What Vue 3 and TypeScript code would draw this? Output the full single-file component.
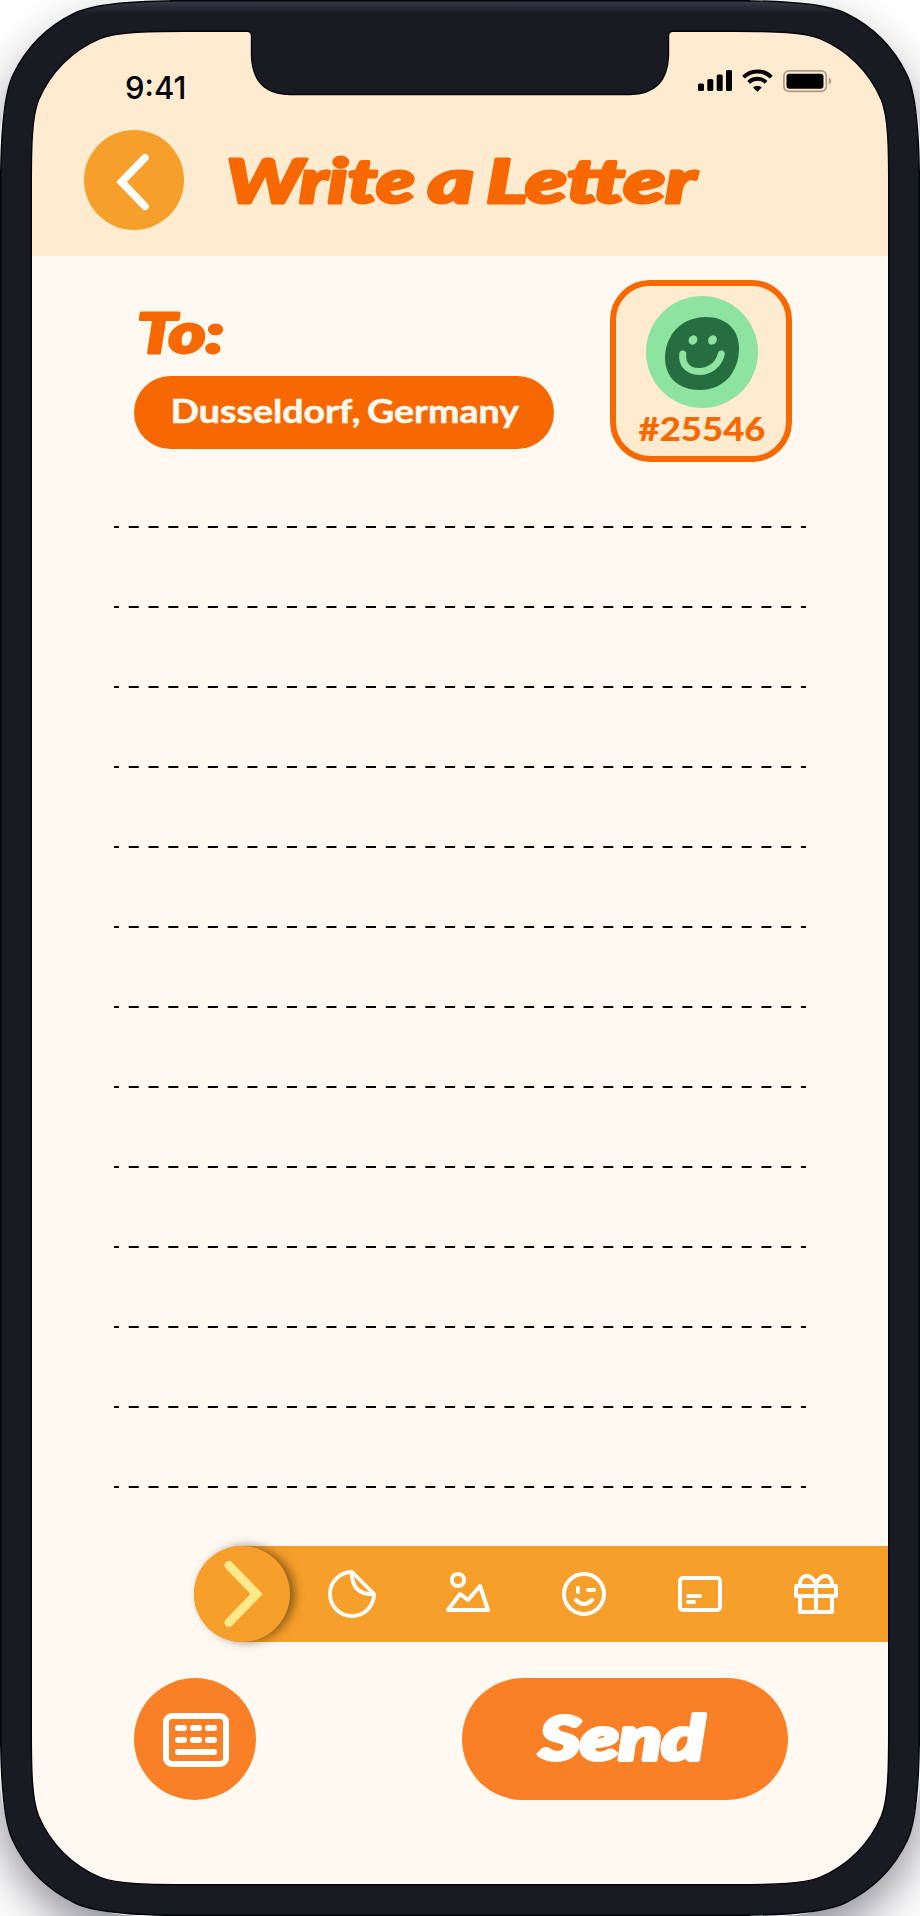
<script setup lang="ts">
const rules: number[] = Array.from({ length: 13 }, (_, i) => i)

type Point = [number, number]

// One smooth corner, as offsets from the corner's own origin, from the top edge to the left edge.
const outerCorner: Point[] = [
  [184, 0.7], [130, 0.7], [91, 5.3], [75, 13],
  [48, 26], [26, 48], [13, 75],
  [5.3, 91], [0.7, 130], [0.7, 184],
]
const innerCorner: Point[] = [
  [184, 31.3], [145, 31.3], [116, 32], [100, 38.6],
  [72.3, 50.2], [50.2, 72.3], [38.6, 100],
  [32, 116], [31.3, 145], [31.3, 184],
]

const W = 920
const H = 1916

function curve(points: Point[]): string {
  return points.slice(1).reduce((d, [x, y], i) => d + (i % 3 === 0 ? 'C' : ' ') + x + ',' + y, '')
}

function outline(corner: Point[], topEdge: string): string {
  const topLeft = corner
  const bottomLeft = corner.map(([x, y]): Point => [x, H - y]).reverse()
  const bottomRight = corner.map(([x, y]): Point => [W - x, H - y])
  const topRight = corner.map(([x, y]): Point => [W - x, y]).reverse()
  const line = (p: Point[]) => `L${p[0][0]},${p[0][1]}`
  return `M${topLeft[0][0]},${topLeft[0][1]}` + curve(topLeft)
    + line(bottomLeft) + curve(bottomLeft)
    + line(bottomRight) + curve(bottomRight)
    + line(topRight) + curve(topRight) + topEdge + 'Z'
}

const notch = 'L673,31.3Q668.5,31.3 668.5,36V56Q667,94 630,94.500H290Q253,94 251.500,56V36Q251.500,31.3 247,31.3'
const bezel = outline(outerCorner, '') + outline(innerCorner, notch)
</script>

<template>
  <main class="device">
    <div class="screen">
      <header class="top">
        <div class="status">
          <span class="time">9:41</span>
          <svg class="indicators" width="136" height="24" viewBox="0 0 136 24">
            <rect x="0" y="14.500" width="6" height="7.500" rx="1.6" />
            <rect x="9.3" y="10" width="6" height="12" rx="1.6" />
            <rect x="18.7" y="5.500" width="6" height="16.500" rx="1.6" />
            <rect x="28" y="1" width="6" height="21" rx="1.6" />
            <g fill="none" stroke="#000" stroke-width="4">
              <path d="M45.5 8.2A19.5 19.5 0 0 1 73.3 8.2" />
              <path d="M50.7 13.4A12.3 12.3 0 0 1 68.1 13.4" />
            </g>
            <path d="M55 18.4a6.5 6.5 0 0 1 8.800 0l-4.4 4.400z" />
            <rect x="85.9" y="1.8" width="42.4" height="20.6" rx="5" fill="none" stroke="#a99b87" stroke-width="1.7" />
            <rect x="88.5" y="4.700" width="37" height="15" rx="3" />
            <path d="M130.8 8.6q2.4 1.2 2.4 3.700t-2.4 3.700z" fill="#a99b87" />
          </svg>
        </div>
        <div class="heading">
          <button class="back" aria-label="Back">
            <svg width="100" height="100" viewBox="0 0 100 100">
              <path d="M61 27.700L37.500 52L61 76.300" fill="none" stroke="#fff" stroke-width="7.600" stroke-linecap="round" />
            </svg>
          </button>
          <svg class="title" width="480" height="76" viewBox="0 0 480 76" role="heading">
            <text y="54.500"><tspan x="1" textLength="189" lengthAdjust="spacingAndGlyphs">Write</tspan> <tspan x="203" textLength="46" lengthAdjust="spacingAndGlyphs">a</tspan> <tspan x="261" textLength="210" lengthAdjust="spacingAndGlyphs">Letter</tspan></text>
          </svg>
        </div>
      </header>

      <section class="recipient">
        <div class="address">
          <svg class="to" width="100" height="70" viewBox="0 0 100 70">
            <text x="-1" y="46.500" textLength="87" lengthAdjust="spacingAndGlyphs">To:</text>
          </svg>
          <div class="place">
            <svg width="360" height="50" viewBox="0 0 360 50">
              <text y="34.500"><tspan x="6.500" textLength="190" lengthAdjust="spacingAndGlyphs">Dusseldorf,</tspan> <tspan x="203" textLength="152" lengthAdjust="spacingAndGlyphs">Germany</tspan></text>
            </svg>
          </div>
        </div>
        <div class="stamp">
          <svg class="face" width="112" height="112" viewBox="0 0 112 112">
            <circle cx="56" cy="56" r="56" fill="#8de39f" />
            <path d="M59 21C79 20.500 93 33 93 52C93 77 77 94 54 94C33 94 19 82 19 61C20 38 36 21.500 59 21Z" fill="#266d3f" />
            <g fill="#8de39f">
              <ellipse cx="47" cy="44" rx="4.200" ry="4.900" transform="rotate(35 47 44)" />
              <ellipse cx="66.500" cy="44" rx="4.200" ry="4.900" transform="rotate(35 66.500 44)" />
            </g>
            <path d="M36.800 58C35.500 68 42 75.500 53 75.500C64.500 75.500 73 68 75.300 58" fill="none" stroke="#8de39f" stroke-width="7" stroke-linecap="round" />
          </svg>
          <svg class="number" width="136" height="40" viewBox="0 0 136 40">
            <text x="5.500" y="32.500" textLength="127" lengthAdjust="spacingAndGlyphs">#25546</text>
          </svg>
        </div>
      </section>

      <section class="paper">
        <svg v-for="rule in rules" :key="rule" class="rule" width="692" height="2" viewBox="0 0 692 2">
          <path d="M0 1H692" stroke="#000" stroke-width="2" stroke-dasharray="10 9.770" stroke-dashoffset="5" />
        </svg>
      </section>

      <nav class="tools">
        <button class="expand" aria-label="Collapse tools">
          <svg width="96" height="96" viewBox="0 0 96 96">
            <path d="M35 19.500L62.500 48L35 76.500" fill="none" stroke="#ffe98a" stroke-width="9" stroke-linecap="round" />
          </svg>
        </button>
        <div class="icons">
          <svg viewBox="0 0 48 48">
            <path d="M24 2A22 22 0 1 0 46 24ZM24 2C23.500 16 30 25 46 24" stroke-width="3.800" />
          </svg>
          <svg viewBox="0 0 48 48">
            <circle cx="14" cy="10" r="6.100" />
            <path d="M4 40L16 24L24 30L36 16L44 40Z" />
          </svg>
          <svg viewBox="0 0 48 48">
            <circle cx="24" cy="24" r="20" />
            <path d="M18 18V22M28 20H34M16 30Q24 38 32 30" />
          </svg>
          <svg viewBox="0 0 48 48">
            <rect x="4" y="8" width="40" height="32" rx="3" />
            <path d="M12 26H24M12 32H18" />
          </svg>
          <svg viewBox="0 0 48 48">
            <path d="M4 16H44V26H4ZM8 26V42H40V26M24 16V42M8 16C7 4 19 2 24 14C29 2 41 4 40 16" />
          </svg>
        </div>
      </nav>

      <footer class="actions">
        <button class="keyboard" aria-label="Keyboard">
          <svg width="66" height="54" viewBox="0 0 66 54" fill="none" stroke="#fff" stroke-width="6" stroke-linecap="round">
            <rect x="3" y="3" width="60" height="48" rx="6" />
            <path d="M15 15H21M30 15H36M45 15H51M15 27H21M30 27H36M45 27H51M15 39H51" />
          </svg>
        </button>
        <button class="send">
          <svg width="180" height="76" viewBox="0 0 180 76">
            <text x="4.500" y="59" textLength="165" lengthAdjust="spacingAndGlyphs">Send</text>
          </svg>
        </button>
      </footer>
    </div>

    <svg class="frame" width="920" height="1916" viewBox="0 0 920 1916">
      <defs>
        <linearGradient id="edge" x1="0" y1="0" x2="0" y2="1">
          <stop offset="0" stop-color="#3a3849" />
          <stop offset="0.007" stop-color="#181b22" />
          <stop offset="1" stop-color="#181b22" />
        </linearGradient>
      </defs>
      <path d="M170 0.500H750M170 1915.500H750M0.500 170V1746M919.500 170V1746" stroke="#000" />
      <path :d="bezel" fill="url(#edge)" stroke="#050508" stroke-width="1.400" fill-rule="evenodd" />
    </svg>
  </main>
</template>

<style>
body { background: #fff; }
</style>

<style scoped>
.device { position: relative; width: 920px; height: 1916px; overflow: hidden; box-sizing: border-box; padding: 32px; background: #fff; }
.device::before { content: ""; position: absolute; inset: 0; border-radius: 140px; box-shadow: 0 22px 48px rgba(20, 20, 36, 0.5); }
.frame { position: absolute; inset: 0; display: block; pointer-events: none; }
.screen { position: relative; width: 856px; height: 1852px; box-sizing: border-box; border-radius: 100px; background: #fff9f2; overflow: hidden; display: flex; flex-direction: column; }
svg { display: block; flex: none; overflow: visible; }
button { border: 0; padding: 0; display: flex; align-items: center; justify-content: center; flex: none; }
.top { height: 224px; flex: none; background: #ffebd0; box-sizing: border-box; padding-top: 37px; }
.status { height: 61px; display: flex; justify-content: space-between; padding: 0 54px 0 93px; box-sizing: border-box; }
.time { font: 500 31px/37px Inter, sans-serif; }
.heading { display: flex; padding-left: 52px; gap: 41px; }
.back { width: 100px; height: 100px; border-radius: 50%; background: #f79f2b; }
.title, .to, .send svg { font-family: Lato, sans-serif; font-weight: 900; font-style: italic; stroke-linejoin: round; }
.title { margin-top: 18px; font-size: 61px; fill: #f76900; stroke: #f76900; stroke-width: 3; }
.recipient { display: flex; justify-content: space-between; padding: 24px 96px 0 102px; height: 206px; box-sizing: border-box; flex: none; }
.address { padding-top: 26px; }
.to { margin-left: 4px; font-size: 55px; fill: #f76900; stroke: #f76900; stroke-width: 3; }
.place { width: 420px; height: 73px; border-radius: 37px; background: #f76900; display: flex; align-items: center; justify-content: center; }
.place svg { font: 700 32px Lato, sans-serif; fill: #fff9f2; stroke: #fff9f2; stroke-width: 0.500; stroke-linejoin: round; }
.stamp { width: 182px; height: 182px; box-sizing: border-box; border: 6px solid #f76900; border-radius: 40px; background: #ffebd0; display: flex; flex-direction: column; align-items: center; padding-top: 10px; }
.face { margin-left: 2px; }
.number { font: 900 33px Lato, sans-serif; fill: #f76900; }
.paper { flex: none; margin: 64px 0 0 82px; height: 994px; display: flex; flex-direction: column; gap: 78px; }
.tools { flex: none; width: 694px; height: 96px; margin: 26px 0 0 162px; background: #f79f2b; border-radius: 48px 0 0 48px; display: flex; align-items: center; }
.expand { width: 96px; height: 96px; border-radius: 50%; background: #f79f2b; box-shadow: 5px 0 10px rgba(60, 40, 10, 0.55); }
.icons { display: flex; gap: 68px; padding-left: 38px; }
.icons svg { width: 48px; height: 48px; fill: none; stroke: #fff; stroke-width: 4; stroke-linecap: round; stroke-linejoin: round; }
.actions { flex: none; display: flex; justify-content: space-between; padding: 36px 100px 0 102px; }
.keyboard { width: 122px; height: 122px; border-radius: 50%; background: #f98026; box-sizing: border-box; padding: 2px 0 0 2px; }
.send { width: 326px; height: 122px; border-radius: 61px; background: #f98026; }
.send svg { font-size: 61px; fill: #fff; stroke: #fff; stroke-width: 4; }
</style>
